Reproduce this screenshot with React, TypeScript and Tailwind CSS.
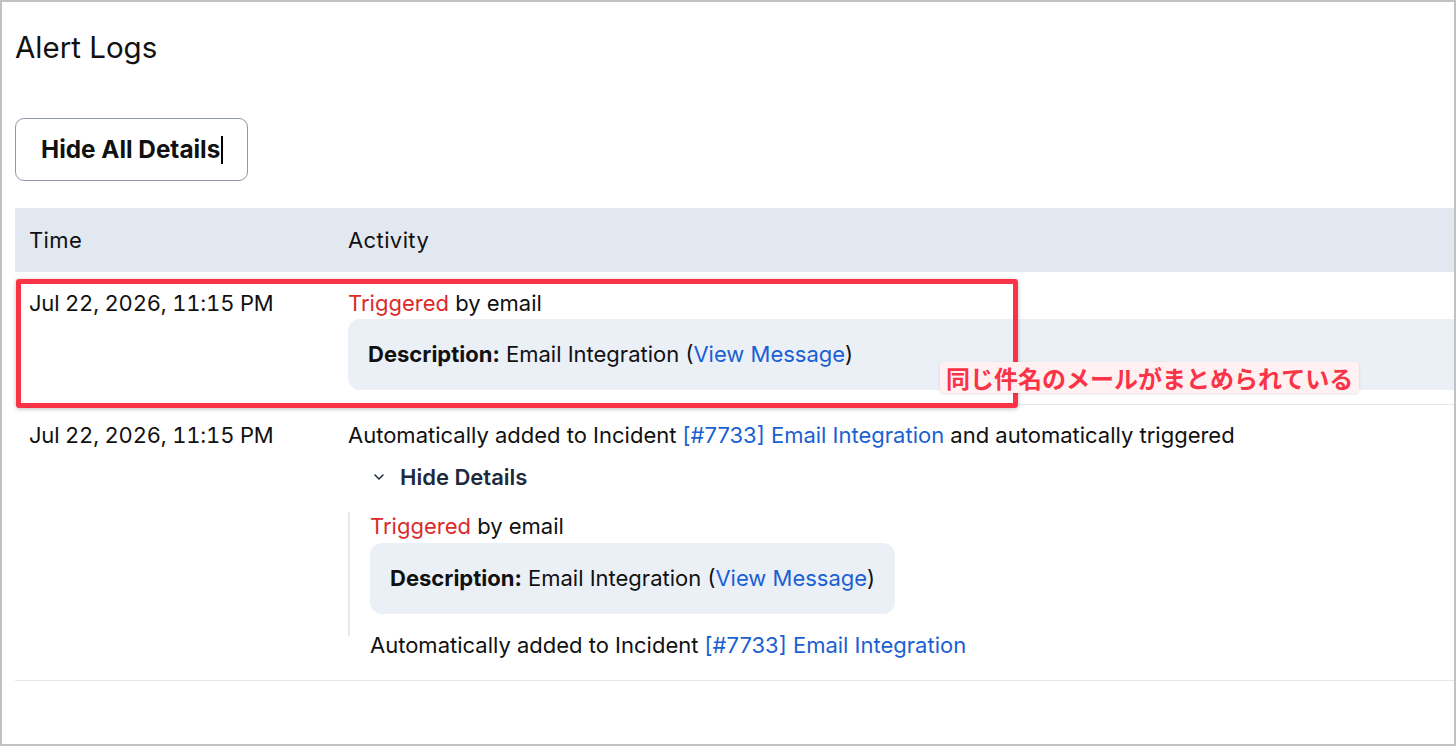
import React from 'react';
import { ChevronDown } from 'lucide-react';

const RED = 'text-[#dc2a2a]';
const LINK = 'text-[#1b5fd2]';

function DescriptionBox({ full }: { full?: boolean }) {
  return (
    <div
      className={`${full ? 'block' : 'inline-block'} rounded-[12px] bg-[#ebf0f7] px-[20px] py-[21px] leading-[29px]`}
    >
      <span className="font-bold">Description:</span> Email Integration (
      <span className={LINK}>View Message</span>)
    </div>
  );
}

export default function App() {
  return (
    <div
      className="relative h-[746px] w-full overflow-hidden border-2 border-[#c2c2c2] bg-white text-[#111111]"
      style={{ fontFamily: 'Inter, "Noto Sans", sans-serif' }}
    >
      <div className="pl-[13px]">
        {/* Titulo */}
        <h1 className="mt-[27px] text-[29.5px] leading-[36px] font-normal">Alert Logs</h1>

        {/* Boton */}
        <button className="mt-[53px] flex h-[63px] items-center rounded-[9px] border border-[#8e98aa] pr-[24px] pl-[25px] text-[24.3px] font-bold">
          Hide All Details
          <span className="ml-[1px] inline-block h-[28px] w-[2px] bg-black" />
        </button>

        {/* Tabla */}
        <div className="-mr-[30px] mt-[27px] text-[22px]">
          <div className="flex h-[64px] items-center bg-[#e2e8f0] tracking-[0.4px]">
            <div className="w-[333px] shrink-0 pl-[14px]">Time</div>
            <div>Activity</div>
          </div>

          {/* Fila 1 */}
          <div className="flex border-b border-[#e2e8f0] pt-[16px] pb-[14px]">
            <div className="w-[333px] shrink-0 pl-[14px] leading-[30px] tracking-[-0.2px] tabular-nums">
              Jul 22, 2026, 11:15 PM
            </div>
            <div className="flex-1">
              <div className="leading-[30px]">
                <span className={RED}>Triggered</span> by email
              </div>
              <div className="mt-[1px]">
                <DescriptionBox full />
              </div>
            </div>
          </div>

          {/* Fila 2 */}
          <div className="flex border-b border-[#e2e8f0] pt-[15px] pb-[21px]">
            <div className="w-[333px] shrink-0 pl-[14px] leading-[30px] tracking-[-0.2px] tabular-nums">
              Jul 22, 2026, 11:15 PM
            </div>
            <div className="flex-1">
              <div className="leading-[30px]">
                Automatically added to Incident <span className={LINK}>[#7733] Email Integration</span> and
                automatically triggered
              </div>
              <div className="mt-[12px] flex items-center pl-[23px] leading-[30px] font-semibold text-[#1e293b]">
                <ChevronDown className="h-[16px] w-[16px]" strokeWidth={2.25} />
                <span className="ml-[13px]">Hide Details</span>
              </div>
              <div className="mt-[22px] border-l-2 border-[#e2e8f0] pb-[22px] pl-[20px]">
                <div className="-mt-[2px] leading-[28px]">
                  <span className={RED}>Triggered</span> by email
                </div>
                <div className="mt-[3px]">
                  <DescriptionBox />
                </div>
              </div>
              <div className="-mt-[5px] pl-[22px] leading-[28px]">
                Automatically added to Incident <span className={LINK}>[#7733] Email Integration</span>
              </div>
            </div>
          </div>
        </div>
      </div>

      {/* Anotacion */}
      <div className="absolute top-[277px] left-[14px] h-[129px] w-[1002px] rounded-[3px] border-[5px] border-[#fa3346] shadow-[0_1px_4px_rgba(0,0,0,0.25)]" />
      <div
        className="absolute top-[360px] left-[938px] flex h-[31px] items-center rounded-[4px] bg-[#fff0f1] px-[6px] text-[24px] leading-none font-bold text-[#fa3346] shadow-[0_1px_3px_rgba(0,0,0,0.12)]"
        style={{ fontFamily: '"Noto Sans CJK JP", sans-serif' }}
      >
        同じ件名のメールがまとめられている
      </div>
    </div>
  );
}
